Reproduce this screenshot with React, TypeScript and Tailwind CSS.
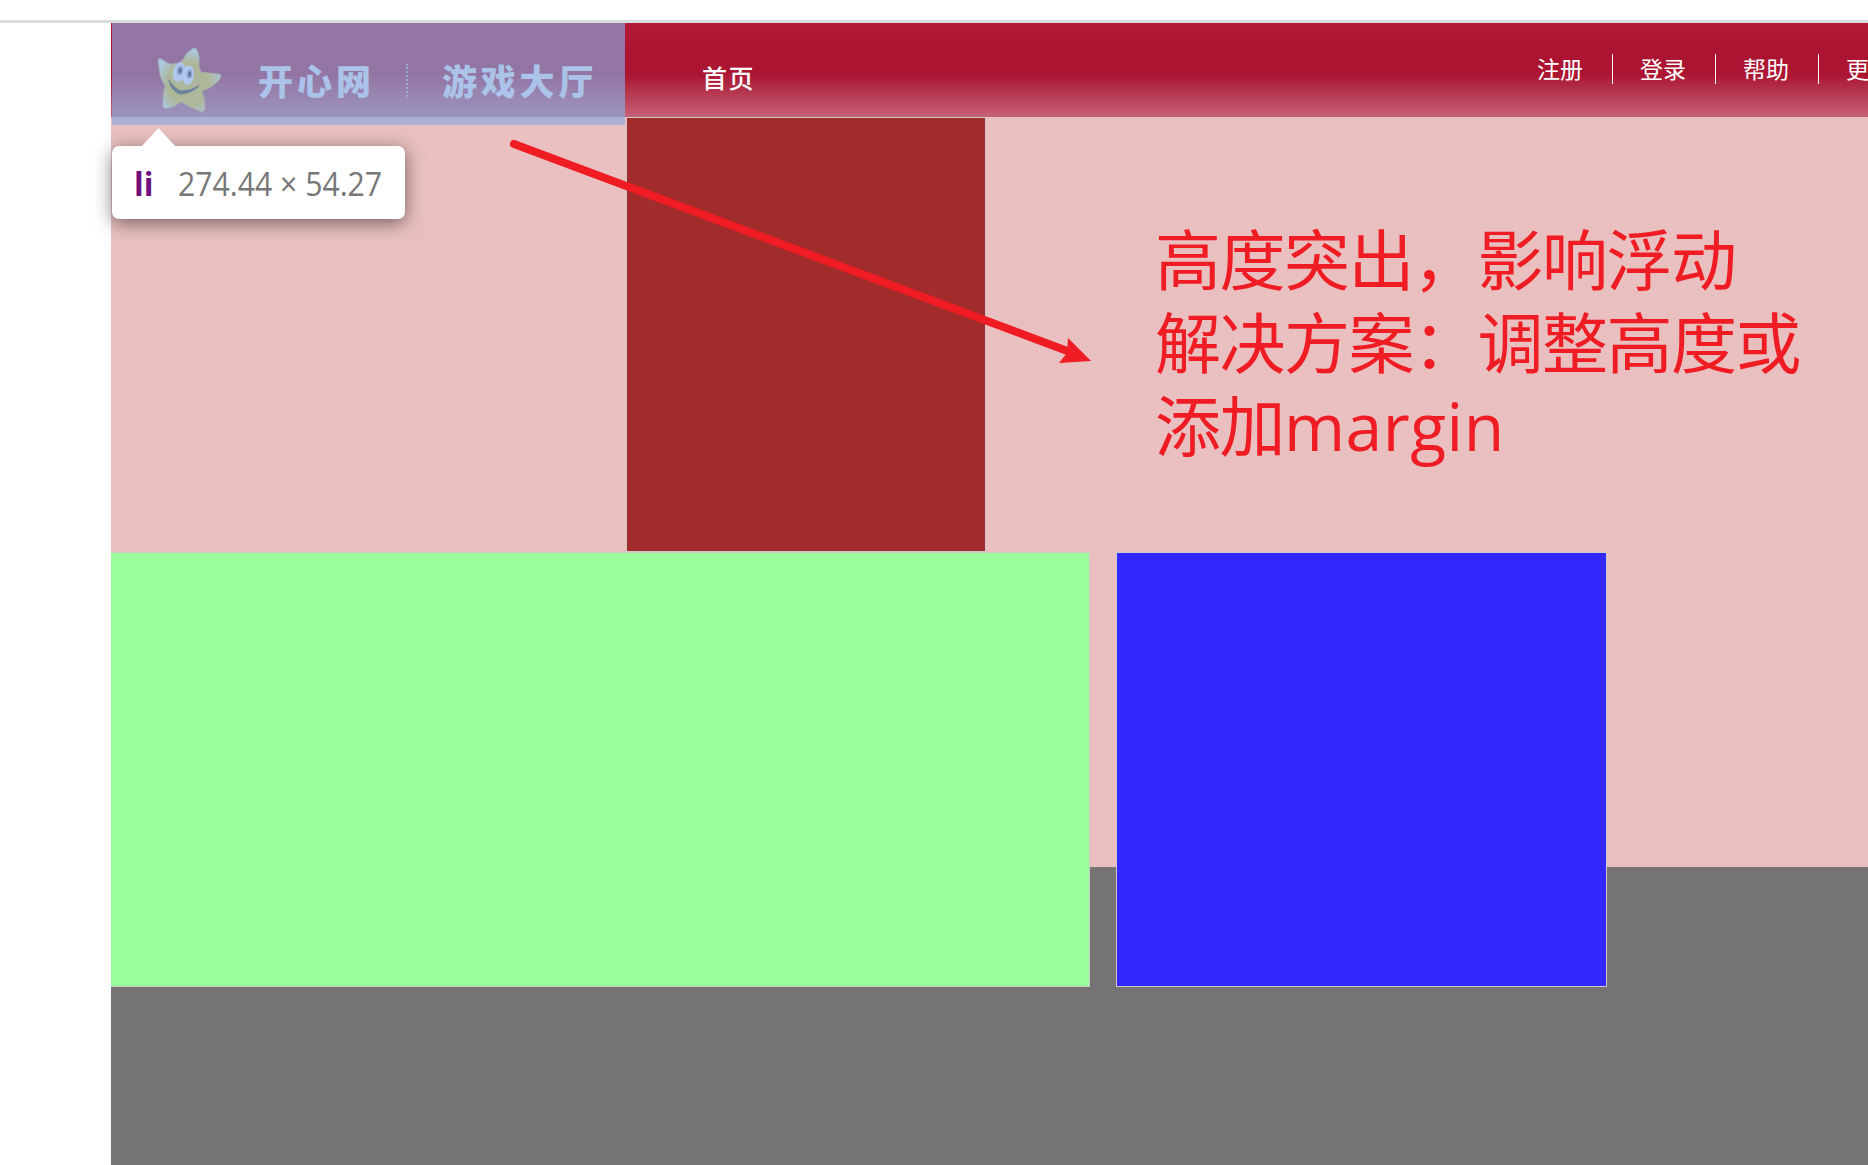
const sans = 'font-["Noto_Sans_CJK_SC",sans-serif]';

function Star() {
  return (
    <svg className="h-[66px] w-[66px] shrink-0" viewBox="0 0 66 66">
      <defs>
        <radialGradient id="body" cx="32" cy="37" r="34" gradientUnits="userSpaceOnUse">
          <stop offset="0" stopColor="#abb6a0" />
          <stop offset="0.62" stopColor="#adb898" />
          <stop offset="1" stopColor="#acc6e0" />
        </radialGradient>
      </defs>
      <path
        d="M36 1 Q39 0 41 5 Q43 10 42 19 L44 25 Q53 26 63 27 Q65 29 63 32 Q56 41 45 44 Q49 54 48 62 Q46 67 42 64 Q34 61 24 55 Q18 60 9 62 Q4 61 6 53 Q6 45 8 39 Q2 30 2 21 L1 13 Q2 10 6 13 Q9 16 15 17 L22 16 Q27 13 29 7 Z"
        fill="url(#body)"
        stroke="#9fa5ad"
        strokeWidth="0.8"
      />
      <ellipse cx="22" cy="25" rx="6" ry="10" fill="#b0c7ee" transform="rotate(12 22 25)" />
      <ellipse cx="31" cy="28" rx="6" ry="9.500" fill="#b0c7ee" transform="rotate(8 31 28)" />
      <ellipse cx="23" cy="23.500" rx="3" ry="4.500" fill="#8ba3cb" transform="rotate(12 23 23.500)" />
      <ellipse cx="32.500" cy="27" rx="2.800" ry="4.500" fill="#8ba3cb" transform="rotate(8 32.500 27)" />
      <ellipse cx="23.200" cy="23.500" rx="1.300" ry="2.600" fill="#5d7090" />
      <ellipse cx="32.700" cy="27" rx="1.200" ry="2.600" fill="#5d7090" />
      <path d="M12 33 Q14 44 23 47 Q33 47 42 39 Q33 44 24 44 Q17 42 12 33 Z" fill="#6c839b" stroke="#6c839b" strokeWidth="1" strokeLinejoin="round" />
      <path d="M10 31 L14 31 M39 36 L43 39" stroke="#b5a3a0" strokeWidth="1.800" />
    </svg>
  );
}

function Header() {
  return (
    <header className="flex h-[94px] bg-[linear-gradient(to_bottom,#b31b38_0%,#ac1532_28%,#ac1532_55%,#b33049_70%,#c56177_100%)] text-white">
      <div className="relative z-10 ml-px flex h-[102px] w-[513px] shrink-0 bg-[#a9afd3]">
        <div className="flex h-[94px] w-full bg-[linear-gradient(to_bottom,#9477a3_0%,#9275a2_55%,#9884b0_75%,#9c94bd_100%)] pl-[45px] pt-6">
          <Star />
          <span className="ml-[35px] mt-[15px] h-9 w-[120px] whitespace-nowrap text-[35px] font-black leading-9 tracking-[4px] text-[#abc3e8]">开心网</span>
          <span className="ml-7 mt-[17px] h-[33px] w-0 border-l-2 border-dotted border-[#9cadd3]" />
          <span className="ml-[34px] mt-[15px] whitespace-nowrap text-[35px] font-black leading-9 tracking-[3.800px] text-[#abc3e8]">游戏大厅</span>
        </div>
      </div>
      <a className="ml-[77px] mt-[38px] h-8 shrink-0 whitespace-nowrap text-[25px] font-medium leading-8 tracking-[1.500px]">首页</a>
      <nav className="ml-auto mr-[-54px] mt-[31px] flex h-[30px] shrink-0 text-[23px] leading-[28px]">
        {['注册', '登录', '帮助', '更多'].map((item, i) => (
          <a key={item} className={i < 3 ? 'w-[103px] whitespace-nowrap border-r border-white pl-[27px]' : 'w-[103px] whitespace-nowrap pl-[27px]'}>
            {item}
          </a>
        ))}
      </nav>
    </header>
  );
}

function InspectTooltip() {
  return (
    <div className="absolute left-[112px] top-[146px] z-20 flex h-[73px] w-[293px] items-center rounded-[7px] bg-white pl-[22px] pt-[2px] font-['Open_Sans',sans-serif] text-[32px] shadow-[0_4px_18px_rgba(0,0,0,0.5)]">
      <svg className="absolute left-[29px] top-[-18px] h-[19px] w-[35px]" viewBox="0 0 35 19">
        <path d="M0 19 L17.500 0 L35 19 Z" fill="white" />
      </svg>
      <b className="w-[44px] text-[#70107d]">li</b>
      <span className="origin-left scale-x-[0.943] whitespace-nowrap text-[#777]">274.44 × 54.27</span>
    </div>
  );
}

function Annotation() {
  return (
    <>
      <svg className="absolute left-[500px] top-[130px] z-10 h-[250px] w-[600px]" viewBox="500 130 600 250" fill="#ef1c24">
        <path d="M514 144 L1070 352" stroke="#ef1c24" strokeWidth="8" strokeLinecap="round" />
        <path d="M1068 338 L1091 361 L1059 363 L1067 353 Z" />
      </svg>
      <p className="absolute left-[1155px] top-[215px] z-10 whitespace-nowrap text-[66px] leading-[83px] tracking-[-1.500px] text-[#ef1c24]">
        高度突出，影响浮动
        <br />
        解决方案：调整高度或
        <br />
        添加<span className="font-['Open_Sans',sans-serif] tracking-[0.500px]">margin</span>
      </p>
    </>
  );
}

export default function App() {
  return (
    <div className={`relative flex h-[1165px] w-[1868px] flex-col overflow-hidden bg-white ${sans}`}>
      <div className="mt-5 h-[3px] shrink-0 bg-[#dadcde]" />
      <div className="ml-[111px] flex-1 bg-[#757373]">
        <Header />
        <main className="h-[750px] bg-[#e9bfbf]">
          <div className="ml-[515px] h-[435px] w-[360px] border border-[#cdcaca] bg-[#a12c2b]" />
          <div className="flex gap-[26px]">
            <div className="h-[435px] w-[979px] border border-l-0 border-[#cdcaca] bg-[#9aff9a]" />
            <div className="h-[435px] w-[491px] border border-[#cdcaca] bg-[#3327fb]" />
          </div>
        </main>
      </div>
      <InspectTooltip />
      <Annotation />
    </div>
  );
}
